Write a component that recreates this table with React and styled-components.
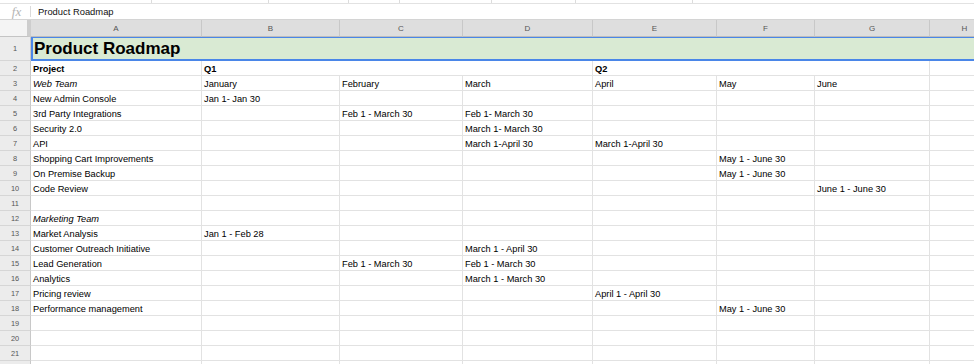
import styled, { createGlobalStyle } from 'styled-components'

const GlobalStyle = createGlobalStyle`
  html, body {
    margin: 0;
    padding: 0;
    background: #fff;
    overflow: hidden;
  }
  body {
    font-family: "Liberation Sans", Arial, sans-serif;
    color: #000;
  }
`

const columns = ['A', 'B', 'C', 'D', 'E', 'F', 'G', 'H']
const toolbarStops = [152, 117, 80, 51, 92, 84, 117]

const rows = [
  { label: 'Web Team', italic: true, cells: ['January', 'February', 'March', 'April', 'May', 'June'] },
  { label: 'New Admin Console', cells: ['Jan 1- Jan 30'] },
  { label: '3rd Party Integrations', cells: ['', 'Feb 1 - March 30', 'Feb 1- March 30'] },
  { label: 'Security 2.0', cells: ['', '', 'March 1- March 30'] },
  { label: 'API', cells: ['', '', 'March 1-April 30', 'March 1-April 30'] },
  { label: 'Shopping Cart Improvements', cells: ['', '', '', '', 'May 1 - June 30'] },
  { label: 'On Premise Backup', cells: ['', '', '', '', 'May 1 - June 30'] },
  { label: 'Code Review', cells: ['', '', '', '', '', 'June 1 - June 30'] },
  { label: '', cells: [] },
  { label: 'Marketing Team', italic: true, cells: [] },
  { label: 'Market Analysis', cells: ['Jan 1 - Feb 28'] },
  { label: 'Customer Outreach Initiative', cells: ['', '', 'March 1 - April 30'] },
  { label: 'Lead Generation', cells: ['', 'Feb 1 - March 30', 'Feb 1 - March 30'] },
  { label: 'Analytics', cells: ['', '', 'March 1 - March 30'] },
  { label: 'Pricing review', cells: ['', '', '', 'April 1 - April 30'] },
  { label: 'Performance management', cells: ['', '', '', '', 'May 1 - June 30'] },
  { label: '', cells: [] },
  { label: '', cells: [] },
  { label: '', cells: [] },
  { label: '', cells: [] },
]

export default function App() {
  return (
    <>
      <GlobalStyle />
      <Page>
        <Toolbar>
          {toolbarStops.map((w, i) => (
            <ToolbarSegment key={i} $w={w} />
          ))}
        </Toolbar>
        <FormulaBar>
          <Fx>fx</Fx>
          <FormulaText>Product Roadmap</FormulaText>
        </FormulaBar>
        <Sheet>
          <Corner />
          {columns.map((c) => (
            <ColumnHeader key={c}>{c}</ColumnHeader>
          ))}

          <RowHeader>1</RowHeader>
          <TitleCell>Product Roadmap</TitleCell>

          <RowHeader>2</RowHeader>
          <Cell $bold>Project</Cell>
          <Cell $bold $span={3}>Q1</Cell>
          <Cell $bold $span={3}>Q2</Cell>
          <Cell />

          {rows.map((row, i) => {
            const rest = [...row.cells]
            while (rest.length < 7) rest.push('')
            return [
              <RowHeader key={`h${i}`}>{i + 3}</RowHeader>,
              <Cell key={`a${i}`} $italic={row.italic}>{row.label}</Cell>,
              ...rest.map((v, j) => <Cell key={`c${i}-${j}`}>{v}</Cell>),
            ]
          })}
          <RowHeader />
        </Sheet>
      </Page>
    </>
  )
}

const Page = styled.div`
  width: 974px;
  height: 364px;
  overflow: hidden;
`

const Toolbar = styled.div`
  display: flex;
  height: 3px;
  border-bottom: 1px solid #e2e2e2;
`

const ToolbarSegment = styled.div`
  width: ${(p) => p.$w}px;
  flex: none;
  box-sizing: border-box;
  border-right: 1px solid #dcdcdc;
`

const FormulaBar = styled.div`
  display: flex;
  align-items: center;
  height: 15px;
  border-bottom: 1px solid #d4d4d4;
`

const Fx = styled.div`
  flex: none;
  width: 31px;
  padding-left: 3px;
  box-sizing: border-box;
  text-align: center;
  font-family: "Liberation Serif", "Times New Roman", serif;
  font-style: italic;
  font-size: 13px;
  color: #b4b4b4;
  border-right: 1px solid #dadada;
  height: 11px;
  line-height: 11px;
`

const FormulaText = styled.div`
  font-size: 9.4px;
  padding-left: 7px;
  color: #111;
`

const Sheet = styled.div`
  display: grid;
  grid-template-columns: 31px 171px 138px 123px 130px 124px 98px 115px 70px;
  grid-template-rows: 17px 24px;
  grid-auto-rows: 15px;
  width: 1000px;
`

const Corner = styled.div`
  box-sizing: border-box;
  background: #f4f4f4;
  border-right: 4px solid #cdcdcd;
  border-bottom: 1px solid #c4c4c4;
`

const ColumnHeader = styled.div`
  box-sizing: border-box;
  display: flex;
  align-items: center;
  justify-content: center;
  background: #dedede;
  border-right: 1px solid #c8c8c8;
  border-bottom: 1px solid #bdbdbd;
  font-size: 8px;
  color: #555;
`

const RowHeader = styled.div`
  box-sizing: border-box;
  display: flex;
  align-items: center;
  justify-content: center;
  background: #ececec;
  border-right: 1px solid #c8c8c8;
  border-bottom: 1px solid #d6d6d6;
  font-size: 7.4px;
  color: #555;
  grid-column: 1;
`

const TitleCell = styled.div`
  grid-column: 2 / -1;
  box-sizing: border-box;
  background: #d9ead3;
  border: 2px solid #4a86e8;
  border-top-width: 1px;
  border-right: none;
  padding: 0 0 0 1px;
  font-weight: bold;
  font-size: 17px;
  line-height: 21px;
  white-space: nowrap;
`

const Cell = styled.div`
  grid-column: span ${(p) => p.$span || 1};
  box-sizing: border-box;
  border-right: 1px solid #e2e2e2;
  border-bottom: 1px solid #e2e2e2;
  padding: 1px 2px 0;
  font-size: 9.25px;
  line-height: 14px;
  white-space: nowrap;
  overflow: hidden;
  font-weight: ${(p) => (p.$bold ? 'bold' : 'normal')};
  font-style: ${(p) => (p.$italic ? 'italic' : 'normal')};
`
